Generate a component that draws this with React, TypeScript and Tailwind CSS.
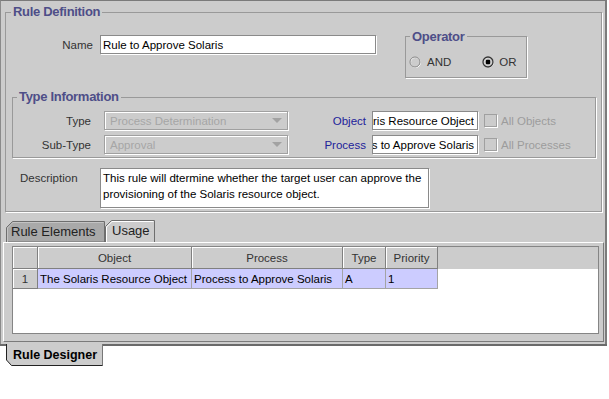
import React from 'react';

const Radio = ({ checked }: { checked?: boolean }) => (
    <svg width="12" height="12" viewBox="0 0 12 12">
        <circle cx="6.5" cy="6.5" r="5" fill="none" stroke="#ffffff" />
        <circle cx="6" cy="6" r="5" fill="none" stroke={checked ? '#333333' : '#858585'} strokeWidth={checked ? 1.3 : 1} />
        {checked && <rect x="3.8" y="3.8" width="4.4" height="4.4" rx="1.2" fill="#000000" />}
    </svg>
);

const ComboArrow = () => (
    <svg width="10" height="5" viewBox="0 0 10 5" className="ml-auto mr-[5px]">
        <polygon points="0,0 10,0 5,5" fill="#a2a2a2" />
    </svg>
);

const Combo = ({ value }: { value: string }) => (
    <div className="ml-[13px] flex h-[19px] w-[184px] items-center border border-[#a0a0a0] pl-[5px] text-[#a6a6a6] shadow-[inset_1px_1px_0_#ffffff,1px_1px_0_#ffffff]">
        <span className="whitespace-nowrap">{value}</span>
        <ComboArrow />
    </div>
);

// text field scrolled to its end, as the reference shows
const ClippedField = ({ value }: { value: string }) => (
    <div className="ml-[6px] flex h-[19px] w-[106px] items-center border border-[#8a8a8a] bg-white pr-[3px] text-black shadow-[1px_1px_0_#ffffff]">
        <span className="block w-full overflow-hidden whitespace-nowrap text-right [direction:rtl]">{value}</span>
    </div>
);

const DisabledCheck = ({ label }: { label: string }) => (
    <div className="ml-[6px] flex items-center">
        <div className="h-[13px] w-[13px] border border-[#a0a0a0] shadow-[1px_1px_0_#ffffff]" />
        <span className="ml-[4px] whitespace-nowrap text-[#9c9c9c]">{label}</span>
    </div>
);

const headerCell = 'flex items-center justify-center border-r border-b border-[#808080] bg-[#cccccc] text-[#333333] shadow-[inset_1px_1px_0_#ffffff]';
const dataCell = 'flex items-center border-r border-b border-[#a4a4a4] bg-[#ccccff] pl-[2px] text-black whitespace-nowrap';

export default function App() {
    return (
        <div className="h-[399px] w-[609px] overflow-hidden bg-white font-['Liberation_Sans',Arial,sans-serif] text-[11.5px] leading-[14px] text-[#333333]">
            <div className="flex h-[344px] w-[607px] flex-col border-t border-l border-r-[2px] border-t-[#7a7a7a] border-l-[#8a8a8a] border-r-[#7c7c7c] bg-[#cccccc]">
                {/* Rule Definition */}
                <fieldset className="mt-[4px] ml-[4px] w-[597px] border border-[#999999] shadow-[1px_1px_0_#ffffff]">
                    <legend className="ml-[5px] px-[2px] text-[13px] leading-[14px] font-bold tracking-[-0.3px] text-[#4e4e88]">Rule Definition</legend>

                    <div className="mt-[11px] flex items-start">
                        <div className="mt-[5px] flex h-[19px] items-center">
                            <span className="w-[87px] text-right">Name</span>
                            <div className="ml-[7px] flex h-[19px] w-[276px] items-center border border-[#8a8a8a] bg-white pl-[2px] text-black shadow-[1px_1px_0_#ffffff]">
                                Rule to Approve Solaris
                            </div>
                        </div>
                        <fieldset className="ml-[29px] w-[122px] border border-[#999999] shadow-[1px_1px_0_#ffffff]">
                            <legend className="ml-[4px] px-[2px] text-[13px] leading-[13px] font-bold tracking-[-0.3px] text-[#4e4e88]">Operator</legend>
                            <div className="mt-[10px] mb-[6px] ml-[3px] flex h-[18px] items-center">
                                <Radio />
                                <span className="ml-[6px]">AND</span>
                                <div className="ml-[31px]">
                                    <Radio checked />
                                </div>
                                <span className="ml-[5px]">OR</span>
                            </div>
                        </fieldset>
                    </div>

                    {/* Type Information */}
                    <fieldset className="mt-[12px] ml-[6px] w-[584px] border border-[#999999] shadow-[1px_1px_0_#ffffff]">
                        <legend className="ml-[4px] px-[2px] text-[13px] leading-[14px] font-bold tracking-[-0.3px] text-[#4e4e88]">Type Information</legend>
                        <div className="mt-[7px] mb-[3px] flex flex-col gap-[5px]">
                            <div className="flex h-[19px] items-center">
                                <span className="w-[78px] text-right">Type</span>
                                <Combo value="Process Determination" />
                                <span className="w-[78px] text-right text-[#22229a]">Object</span>
                                <ClippedField value="The Solaris Resource Object" />
                                <DisabledCheck label="All Objects" />
                            </div>
                            <div className="flex h-[19px] items-center">
                                <span className="w-[78px] text-right">Sub-Type</span>
                                <Combo value="Approval" />
                                <span className="w-[78px] text-right text-[#22229a]">Process</span>
                                <ClippedField value="Process to Approve Solaris" />
                                <DisabledCheck label="All Processes" />
                            </div>
                        </div>
                    </fieldset>

                    <div className="mt-[10px] mb-[3px] flex items-start">
                        <span className="mt-[2px] w-[94px] pl-[14px] leading-[16px]">Description</span>
                        <div className="h-[40px] w-[329px] border border-[#8a8a8a] bg-white pt-[1px] pl-[2px] leading-[16px] text-black shadow-[1px_1px_0_#ffffff]">
                            This rule will dtermine whether the target user can approve the
                            <br />
                            provisioning of the Solaris resource object.
                        </div>
                    </div>
                </fieldset>

                {/* Rule Elements / Usage */}
                <div className="mt-[8px] ml-[2px] w-[601px]">
                    <div className="flex h-[22px] items-end pl-[3px]">
                        <div className="relative flex h-[21px] w-[99px] items-center pl-[5px] text-[13px] text-[#222222]">
                            <svg className="absolute inset-0" width="99" height="21" viewBox="0 0 99 21">
                                <path d="M0.5,21 L0.5,6.5 L6.5,0.5 L98.5,0.5 L98.5,21 Z" fill="#a9a9a9" stroke="#6e6e6e" />
                                <path d="M1.5,21 L1.5,7 L7,1.5 L97.5,1.5" fill="none" stroke="#c4c4c4" />
                            </svg>
                            <span className="relative">Rule Elements</span>
                        </div>
                        <div className="relative flex h-[22px] w-[50px] items-center pl-[7px] text-[13px] text-[#222222]">
                            <svg className="absolute inset-0" width="50" height="22" viewBox="0 0 50 22">
                                <path d="M0.5,22 L0.5,6.5 L6.5,0.5 L49.5,0.5 L49.5,22" fill="#cccccc" stroke="#6e6e6e" />
                                <path d="M1.5,22 L1.5,7 L7,1.5 L48.5,1.5" fill="none" stroke="#ffffff" />
                            </svg>
                            <span className="relative">Usage</span>
                        </div>
                    </div>
                    <div className="h-[100px] border border-t-white border-l-white border-r-[#7a7a7a] border-b-[#7a7a7a] pt-[3px] pl-[8px]">
                        <div className="h-[88px] w-[587px] border border-[#858585] bg-white">
                            <div className="flex h-[22px] bg-[#cccccc]">
                                <div className={`${headerCell} w-[25px]`} />
                                <div className={`${headerCell} w-[154px]`}>Object</div>
                                <div className={`${headerCell} w-[151px]`}>Process</div>
                                <div className={`${headerCell} w-[43px]`}>Type</div>
                                <div className={`${headerCell} w-[52px]`}>Priority</div>
                            </div>
                            <div className="flex h-[20px]">
                                <div className={`${headerCell} w-[25px]`}>1</div>
                                <div className={`${dataCell} w-[154px]`}>The Solaris Resource Object</div>
                                <div className={`${dataCell} w-[151px]`}>Process to Approve Solaris</div>
                                <div className={`${dataCell} w-[43px]`}>A</div>
                                <div className={`${dataCell} w-[52px]`}>1</div>
                            </div>
                        </div>
                    </div>
                </div>
            </div>

            {/* bottom tab */}
            <div className="flex h-[22px] w-[607px]">
                <div className="w-[6px] border-t-[2px] border-t-[#6a6a6a]" />
                <div className="relative flex h-[22px] w-[97px] items-center pb-[1px] pl-[7px] text-[12.5px] font-bold text-black">
                    <svg className="absolute inset-0" width="97" height="22" viewBox="0 0 97 22">
                        <path d="M0.5,0 L0.5,16 L5.5,21.5 L96.5,21.5 L96.5,0" fill="#cccccc" stroke="#222222" />
                        <path d="M96.5,0 L96.5,21.5" stroke="#777777" />
                    </svg>
                    <span className="relative">Rule Designer</span>
                </div>
                <div className="flex-1 border-t-[2px] border-t-[#6a6a6a]" />
            </div>
        </div>
    );
}
